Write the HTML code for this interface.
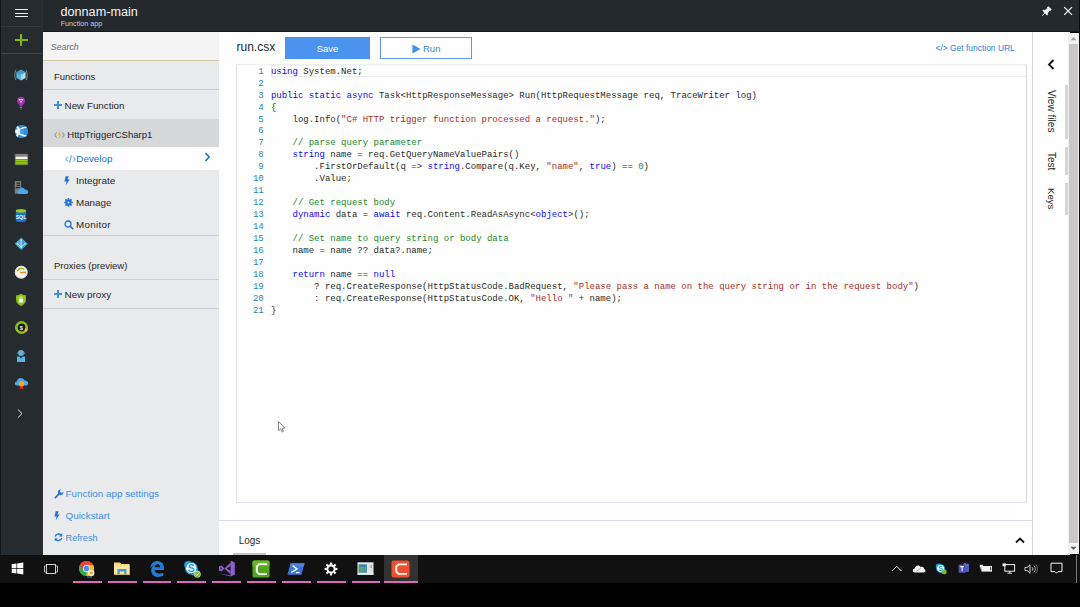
<!DOCTYPE html>
<html>
<head>
<meta charset="utf-8">
<style>
*{box-sizing:border-box;margin:0;padding:0}
html,body{width:1080px;height:607px;overflow:hidden;background:#000;font-family:"Liberation Sans",sans-serif;}
#root{position:absolute;left:0;top:0;width:1080px;height:607px;background:#000;overflow:hidden}
.abs{position:absolute}
#topbar{left:0;top:0;width:1080px;height:32px;background:#24292d}
#rail{left:0;top:0;width:43px;height:555px;background:#262b30}
#side{left:43px;top:32px;width:176px;height:523px;background:#e9eaec}
#main{left:219px;top:32px;width:851px;height:523px;background:#fefefe}
#task{left:0;top:555px;width:1080px;height:28px;background:#111111}
.t{position:absolute;white-space:nowrap;line-height:1}
.row{position:absolute;left:0;width:176px}
.hl{position:absolute;left:0;width:176px;height:1px;background:#cfd0d3}
#code{position:absolute;width:791px;height:439px;border:1px solid #e3e5ec;border-top-color:#eff0f4;border-right-color:#dadbe0;border-left-color:#e0e2e8;background:#fefefe}
.ln{position:absolute;left:0;width:26.7px;text-align:right;font-family:"Liberation Mono",monospace;font-size:9px;line-height:12px;color:#2b85b5;white-space:pre}
.cl{position:absolute;left:33.9px;font-family:"Liberation Mono",monospace;font-size:9px;line-height:12px;color:#2a2a2a;white-space:pre}
.k{color:#0c0cf4}.c{color:#23862a}.s{color:#a8302a}.n{color:#0a8a60}
.vt{writing-mode:vertical-rl;font-size:9.5px;color:#23272b}
</style>
</head>
<body>
<div id="root">
  <div id="topbar" class="abs">
    <div class="abs" style="left:0;top:31px;width:1080px;height:1px;background:#15191c"></div>
    <div class="t" style="left:60.5px;top:5.8px;font-size:12.65px;color:#f4f4f4;">donnam-main</div>
    <div class="t" style="left:60.7px;top:20.2px;font-size:7.2px;color:#c9cbcd;">Function app</div>
    <svg class="abs" style="left:1040px;top:5px" width="14" height="14" viewBox="0 0 14 14"><path d="M2.38 5.85 L7.05 10.52 L8.32 9.24 L3.66 4.58Z M6.91 2.60 L10.30 5.99 L11.72 4.58 L8.32 1.18Z M3.73 5.92 L6.98 9.17 L10.37 4.65 L8.25 2.53Z" fill="#f6f6f6"/><path d="M2.10 10.80 L5.35 7.55" stroke="#e8e8f0" stroke-width="1"/></svg>
    <svg class="abs" style="left:1062px;top:5px" width="12" height="12" viewBox="0 0 12 12"><path d="M2.2 2.1 L10 9.9 M10 2.1 L2.2 9.9" stroke="#f5f5f5" stroke-width="1.3" fill="none"/></svg>
  </div>
  <div id="rail" class="abs">
    <div class="abs" style="left:0;top:0;width:1px;height:555px;background:#14171a"></div>
    <div class="abs" style="left:42px;top:0;width:1px;height:32px;background:#2d3237"></div>
    <div class="abs" style="left:1px;top:26px;width:41px;height:1px;background:#33383d"></div>
    <div class="abs" style="left:1px;top:53px;width:41px;height:1px;background:#3a4650"></div>
    <!-- hamburger -->
    <div class="abs" style="left:14.5px;top:9px;width:13px;height:1px;background:#f0f0f0"></div>
    <div class="abs" style="left:14.5px;top:12.6px;width:13px;height:1px;background:#f0f0f0"></div>
    <div class="abs" style="left:14.5px;top:16.2px;width:13px;height:1px;background:#f0f0f0"></div>
    <!-- plus -->
    <div class="abs" style="left:14.5px;top:39px;width:13px;height:2px;background:#7fba00"></div>
    <div class="abs" style="left:20px;top:34px;width:2px;height:12px;background:#7fba00"></div>
    <!-- cube -->
    <svg class="abs" style="left:13px;top:68px" width="16" height="14" viewBox="0 0 16 14">
      <path d="M3 1.8 C1.4 4 1.4 10 3 12.2" stroke="#9aa0a6" stroke-width="0.8" fill="none"/><path d="M13 1.8 C14.6 4 14.6 10 13 12.2" stroke="#9aa0a6" stroke-width="0.8" fill="none"/>
      <path d="M8 1.4 L12.6 3.9 L8 6.4 L3.4 3.9Z" fill="#3aa0d8"/><path d="M3.4 3.9 L8 6.4 V12.4 L3.4 9.9Z" fill="#59b4e4"/><path d="M12.6 3.9 L8 6.4 V12.4 L12.6 9.9Z" fill="#a8dcf4"/>
    </svg>
    <!-- bulb -->
    <svg class="abs" style="left:16px;top:96px" width="10" height="15" viewBox="0 0 10 15">
      <circle cx="5" cy="4.8" r="4" fill="#9b2fae"/><path d="M2.6 7.6 L3.8 10.4 H6.2 L7.4 7.6Z" fill="#9b2fae"/>
      <path d="M2.4 3 H7.6 L5 7Z" fill="#f8eefa"/><circle cx="5" cy="4.4" r="1" fill="#a838b8"/>
      <rect x="3.8" y="11.2" width="2.4" height="0.8" fill="#8a8a8a"/><rect x="4.1" y="12.6" width="1.8" height="0.8" fill="#777"/>
    </svg>
    <!-- globe -->
    <svg class="abs" style="left:14px;top:124px" width="15" height="15" viewBox="0 0 15 15">
      <circle cx="7.5" cy="7.5" r="6.6" fill="#2f8fd8"/>
      <path d="M3 2.6 C5.6 4.5 5.2 9.8 2.6 12.2" stroke="#f2f8fc" stroke-width="2.2" fill="none"/>
      <path d="M3.4 7.2 C6 5 9 3.2 12.6 3.4" stroke="#f2f8fc" stroke-width="1.3" fill="none"/>
      <path d="M3.6 8 C6 10.5 9 12.2 12.4 11.6" stroke="#f2f8fc" stroke-width="1.3" fill="none"/>
      <circle cx="3.4" cy="7.5" r="2.3" fill="#f2f8fc"/><circle cx="8" cy="7.4" r="2.2" fill="#4aa4e4"/>
    </svg>
    <!-- window -->
    <svg class="abs" style="left:14px;top:153px" width="15" height="13" viewBox="0 0 15 13">
      <rect x="0.8" y="0.8" width="13.4" height="11.4" fill="#6e6a62"/><rect x="1.6" y="1.2" width="11.8" height="2" fill="#8a867e"/>
      <rect x="1.6" y="3.6" width="11.8" height="2.4" fill="#f4f4f0"/><rect x="1.6" y="6.6" width="11.8" height="1.8" fill="#9acb1c"/><rect x="1.6" y="9" width="11.8" height="2.4" fill="#8ac010"/>
    </svg>
    <!-- server cloud -->
    <svg class="abs" style="left:14px;top:180px" width="15" height="15" viewBox="0 0 15 15">
      <rect x="0.8" y="1" width="6.4" height="12.8" fill="#7a7a7a"/><rect x="1.8" y="2.6" width="4.4" height="1.2" fill="#2a2a2a"/><rect x="1.8" y="4.8" width="4.4" height="1.2" fill="#2a2a2a"/><rect x="1.8" y="7" width="4.4" height="1.2" fill="#2a2a2a"/>
      <rect x="1.6" y="2.6" width="0.8" height="1.2" fill="#b8d432"/><rect x="1.6" y="4.8" width="0.8" height="1.2" fill="#b8d432"/>
      <path d="M5.4 14 C3.6 14 3 12.8 3 11.8 C3 10.8 3.8 10 4.8 10 C5 8.6 6.4 7.6 7.8 7.6 C9.2 7.6 10.2 8.4 10.8 9.4 C12.6 9.2 14.2 10.4 14.2 12 C14.2 13.2 13.4 14 12.2 14Z" fill="#4aa8e8"/>
    </svg>
    <!-- sql -->
    <svg class="abs" style="left:15px;top:208px" width="12" height="15" viewBox="0 0 12 15">
      <path d="M0.8 2.8 V12.2 C0.8 13.4 3 14.2 6 14.2 C9 14.2 11.2 13.4 11.2 12.2 V2.8Z" fill="#1474d0"/>
      <ellipse cx="6" cy="2.8" rx="5.2" ry="1.9" fill="#9acb1c"/>
      <text x="6" y="10.6" text-anchor="middle" font-family="Liberation Sans" font-weight="bold" font-size="5.2" fill="#eaf4ff">SQL</text>
    </svg>
    <!-- AD diamond -->
    <svg class="abs" style="left:14.2px;top:236.8px" width="14.4" height="14.2" viewBox="0 0 15 15">
      <path d="M7.5 0.8 L14.2 7.2 L7.5 13.8 L0.8 7.2Z" fill="#4ab0e8"/><path d="M7.5 0.8 L14.2 7.2 L7.5 13.8Z" fill="#3a9edc"/>
      <path d="M7.5 3 V11 M3.8 7.2 L7.5 10.6 L11.2 7.2" stroke="#d8eefa" stroke-width="0.9" fill="none"/>
      <circle cx="7.5" cy="3.2" r="0.9" fill="#f4e060"/><circle cx="3.6" cy="7.2" r="0.9" fill="#f4e060"/><circle cx="11.4" cy="7.2" r="0.9" fill="#f4e060"/><circle cx="7.5" cy="10.8" r="0.9" fill="#f4e060"/>
    </svg>
    <!-- gauge -->
    <svg class="abs" style="left:14.2px;top:264.5px" width="14.4" height="14.4" viewBox="0 0 15 15">
      <circle cx="7.5" cy="7.5" r="6.6" fill="#f6f4f2"/><circle cx="7.5" cy="7.5" r="6.2" fill="none" stroke="#dcd6d0" stroke-width="0.8"/>
      <path d="M3.6 6.4 A4.4 4.4 0 0 1 10.6 4.6" stroke="#7fba00" stroke-width="1.4" fill="none"/>
      <rect x="6.2" y="7" width="6.2" height="1.5" fill="#f08a24"/>
    </svg>
    <!-- shield -->
    <svg class="abs" style="left:15.2px;top:293px" width="12" height="14" viewBox="0 0 13 15">
      <path d="M6.5 0.8 C8.4 2 10.2 2.4 11.8 2.4 V7.6 C11.8 10.6 9.4 12.8 6.5 14 C3.6 12.8 1.2 10.6 1.2 7.6 V2.4 C2.8 2.4 4.6 2 6.5 0.8Z" fill="#8cc21a"/>
      <rect x="4.2" y="6.4" width="4.6" height="3.8" fill="#f4f8ec"/><path d="M5.2 6.4 V5.4 A1.3 1.3 0 0 1 7.8 5.4 V6.4" stroke="#f4f8ec" stroke-width="0.9" fill="none"/>
    </svg>
    <!-- cost ring -->
    <svg class="abs" style="left:14px;top:320px" width="15" height="15" viewBox="0 0 15 15">
      <circle cx="7.5" cy="7.5" r="5.2" fill="#15181b" stroke="#8cc21a" stroke-width="2.6"/>
      <path d="M11.2 11.2 A5.2 5.2 0 0 0 12.6 8.6" stroke="#f4b440" stroke-width="2.6" fill="none"/>
      <text x="7.3" y="9.6" text-anchor="middle" font-family="Liberation Sans" font-weight="bold" font-size="5.6" fill="#f0f0f0">$</text>
    </svg>
    <!-- person -->
    <svg class="abs" style="left:16px;top:349px" width="10" height="14" viewBox="0 0 10 14">
      <circle cx="5" cy="4" r="2.9" fill="#59b4e4"/><path d="M1.2 5 A3.9 3.9 0 0 1 8.8 5" stroke="#9aa0a6" stroke-width="0.8" fill="none"/>
      <path d="M1 7.6 H3.4 L5 9.4 L6.6 7.6 H9 V13 H1Z" fill="#59b4e4"/>
    </svg>
    <!-- cloud cert -->
    <svg class="abs" style="left:14px;top:377px" width="15" height="14" viewBox="0 0 15 14">
      <path d="M3.4 8.6 C1.8 8.6 0.8 7.6 0.8 6.4 C0.8 5.2 1.8 4.4 2.8 4.4 C3 2.4 4.8 1 6.8 1 C8.6 1 10 2 10.6 3.4 C12.6 3.2 14.2 4.6 14.2 6.2 C14.2 7.6 13.2 8.6 11.8 8.6Z" fill="#4aa8e8"/>
      <path d="M6 8 L5.6 12.8 L7.5 11.6 L9.4 12.8 L9 8Z" fill="#d82828"/>
      <circle cx="7.5" cy="6.8" r="2.7" fill="#f8a41c"/>
    </svg>
    <!-- chevron -->
    <svg class="abs" style="left:16px;top:408px" width="8" height="12" viewBox="0 0 8 12"><path d="M1.9 1.5 L6 5.6 L1.9 9.7" stroke="#e6e6ea" stroke-width="1" fill="none"/></svg>
  </div>
  <div id="side" class="abs">
    <div class="abs" style="left:0;top:0;width:176px;height:28px;background:#f4f4f5"></div>
    <div class="abs" style="left:0;top:28px;width:176px;height:1px;background:#d9c9a8"></div>
    <div class="t" style="left:7.8px;top:11.2px;font-size:8.8px;font-style:italic;color:#6d6f72;">Search</div>
    <div class="t" style="left:11px;top:40px;font-size:9.5px;color:#23272b;">Functions</div>
    <div class="hl" style="top:57px"></div>
    <div class="t" style="left:21.6px;top:69px;font-size:9.8px;color:#23272b;">New Function</div>
    <div class="abs" style="left:0;top:87px;width:176px;height:28.5px;background:#d6d7d9"></div>
    <div class="t" style="left:24.3px;top:98.3px;font-size:9.55px;color:#23272b;">HttpTriggerCSharp1</div>
    <div class="abs" style="left:0;top:115.4px;width:176px;height:22.4px;background:#fefefe"></div>
    <div class="t" style="left:33.3px;top:122px;font-size:9.87px;color:#1b6fd0;">Develop</div>
    <div class="t" style="left:33px;top:144px;font-size:9.95px;color:#23272b;">Integrate</div>
    <div class="t" style="left:33px;top:166px;font-size:9.8px;color:#23272b;">Manage</div>
    <div class="t" style="left:33px;top:188px;font-size:9.8px;letter-spacing:0.3px;color:#23272b;">Monitor</div>
    <div class="hl" style="top:203px"></div>
    <div class="t" style="left:11px;top:229px;font-size:9.5px;color:#23272b;">Proxies (preview)</div>
    <div class="hl" style="top:247px"></div>
    <div class="t" style="left:21.6px;top:258px;font-size:9.9px;color:#23272b;">New proxy</div>
    <div class="hl" style="top:276px"></div>
    <div class="t" style="left:22.6px;top:457.4px;font-size:9.84px;color:#3f8fe0;">Function app settings</div>
    <div class="t" style="left:22.6px;top:479px;font-size:9.8px;color:#3f8fe0;">Quickstart</div>
    <div class="t" style="left:22.6px;top:501.8px;font-size:9.15px;color:#3f8fe0;">Refresh</div>
    <!-- plus New Function -->
    <div class="abs" style="left:11px;top:72.2px;width:7.6px;height:2px;background:#3f8fe4"></div>
    <div class="abs" style="left:13.8px;top:69.4px;width:2px;height:7.6px;background:#3f8fe4"></div>
    <!-- plus New proxy -->
    <div class="abs" style="left:11px;top:261.2px;width:7.6px;height:2px;background:#3f8fe4"></div>
    <div class="abs" style="left:13.8px;top:258.4px;width:2px;height:7.6px;background:#3f8fe4"></div>
    <!-- function icon -->
    <svg class="abs" style="left:11px;top:98px" width="11" height="10" viewBox="0 0 11 10">
      <path d="M2.6 2.4 L0.7 5 L2.6 7.6" stroke="#3f8fe4" stroke-width="0.9" fill="none"/><path d="M8.4 2.4 L10.3 5 L8.4 7.6" stroke="#3f8fe4" stroke-width="0.9" fill="none"/>
      <path d="M6.4 0.4 L3.4 5.2 H5.2 L4.2 9.6 L7.8 4.2 H5.8 Z" fill="#f8b928"/>
    </svg>
    <!-- </> develop -->
    <svg class="abs" style="left:21.5px;top:123px" width="11" height="8" viewBox="0 0 11 8">
      <path d="M2.8 1.6 L0.7 4 L2.8 6.4 M8.2 1.6 L10.3 4 L8.2 6.4 M6.4 0.4 L4.6 7.6" stroke="#2a7fdc" stroke-width="0.85" fill="none"/>
    </svg>
    <!-- develop chevron -->
    <svg class="abs" style="left:161px;top:120px" width="7" height="10" viewBox="0 0 7 10"><path d="M1.4 1 L5.2 5 L1.4 9" stroke="#1b6fd0" stroke-width="1.6" fill="none"/></svg>
    <!-- integrate bolt -->
    <svg class="abs" style="left:21px;top:144px" width="6" height="10" viewBox="0 0 6 10"><path d="M1.6 0.3 H4.6 L3.4 3.6 H5.6 L1.6 9.6 L2.6 5.4 H0.5Z" fill="#1b6fd0"/></svg>
    <!-- manage gear -->
    <svg class="abs" style="left:21px;top:166.4px" width="9" height="9" viewBox="0 0 9 9">
      <g fill="none" stroke="#1b6fd0"><circle cx="4.5" cy="4.5" r="2.1" stroke-width="2.1"/>
      <g stroke-width="1.5"><path d="M4.5 0.2 V1.6"/><path d="M4.5 7.4 V8.8"/><path d="M0.2 4.5 H1.6"/><path d="M7.4 4.5 H8.8"/><path d="M1.4 1.4 L2.4 2.4"/><path d="M6.6 6.6 L7.6 7.6"/><path d="M1.4 7.6 L2.4 6.6"/><path d="M6.6 2.4 L7.6 1.4"/></g></g>
    </svg>
    <!-- monitor magnifier -->
    <svg class="abs" style="left:21px;top:188px" width="10" height="10" viewBox="0 0 10 10"><circle cx="4" cy="4" r="3" fill="none" stroke="#1b6fd0" stroke-width="1.3"/><path d="M6.2 6.2 L9.2 9.2" stroke="#1b6fd0" stroke-width="1.5"/></svg>
    <!-- wrench -->
    <svg class="abs" style="left:10.5px;top:457px" width="10" height="10" viewBox="0 0 10 10">
      <path d="M1.4 8.6 L5.6 4.4" stroke="#2474dc" stroke-width="1.9" stroke-linecap="round"/>
      <path d="M9.3 2.6 A2.8 2.8 0 1 1 7.2 0.6 L5.9 2 L6.4 3.6 L8 4 Z" fill="#2474dc"/>
    </svg>
    <!-- bolt -->
    <svg class="abs" style="left:10.6px;top:479.4px" width="6" height="10" viewBox="0 0 6 10"><path d="M1.6 0.3 H4.6 L3.4 3.6 H5.6 L1.6 9.6 L2.6 5.4 H0.5Z" fill="#2474dc"/></svg>
    <!-- refresh -->
    <svg class="abs" style="left:10.8px;top:501.2px" width="9" height="8.6" viewBox="0 0 10 10" preserveAspectRatio="none">
      <path d="M1.4 4.2 A3.7 3.7 0 0 1 7.8 2.4" stroke="#2474dc" stroke-width="1.5" fill="none"/><path d="M9.2 0.4 V4 H5.6Z" fill="#2474dc"/>
      <path d="M8.6 5.8 A3.7 3.7 0 0 1 2.2 7.6" stroke="#2474dc" stroke-width="1.5" fill="none"/><path d="M0.8 9.6 V6 H4.4Z" fill="#2474dc"/>
    </svg>
  </div>
  <div id="main" class="abs">
    <div class="t" style="left:17.5px;top:8.5px;font-size:12px;color:#23272b;">run.csx</div>
    <div class="abs" style="left:66px;top:5px;width:85px;height:22px;background:#4a94f0"></div>
    <div class="t" style="left:66px;top:12px;width:85px;text-align:center;font-size:9.5px;color:#fff;">Save</div>
    <div class="abs" style="left:161px;top:5px;width:92px;height:22px;border:1px solid #5a9ae8;background:#fefefe"></div>
    <div class="t" style="left:204px;top:12px;font-size:9.5px;color:#3a86d4;">Run</div>
    <svg class="abs" style="left:193px;top:11.6px" width="9" height="10" viewBox="0 0 9 10"><path d="M0.4 0.6 L8.6 5 L0.4 9.4 Z" fill="#4590ee"/></svg>
    <div class="t" style="left:716.5px;top:12px;font-size:8.45px;color:#2f7fd6;">&lt;/&gt; Get function URL</div>
    <div id="code" style="left:17px;top:32px;">
      <div class="abs" style="left:34px;top:0;width:755px;height:12px;border:1px solid #ebebeb;border-right:none;border-top-color:#f4f4f4"></div>
      <div class="ln" style="top:0.75px">1</div>
      <div class="cl" style="top:0.75px"><span class="k">using</span> System.Net;</div>
      <div class="ln" style="top:12.69px">2</div>
      <div class="ln" style="top:24.63px">3</div>
      <div class="cl" style="top:24.63px"><span class="k">public</span> <span class="k">static</span> <span class="k">async</span> Task&lt;HttpResponseMessage&gt; Run(HttpRequestMessage req, TraceWriter log)</div>
      <div class="ln" style="top:36.57px">4</div>
      <div class="cl" style="top:36.57px">{</div>
      <div class="ln" style="top:48.51px">5</div>
      <div class="cl" style="top:48.51px">    log.Info(<span class="s">"C# HTTP trigger function processed a request."</span>);</div>
      <div class="ln" style="top:60.45px">6</div>
      <div class="ln" style="top:72.39px">7</div>
      <div class="cl" style="top:72.39px">    <span class="c">// parse query parameter</span></div>
      <div class="ln" style="top:84.33px">8</div>
      <div class="cl" style="top:84.33px">    <span class="k">string</span> name = req.GetQueryNameValuePairs()</div>
      <div class="ln" style="top:96.27px">9</div>
      <div class="cl" style="top:96.27px">        .FirstOrDefault(q =&gt; <span class="k">string</span>.Compare(q.Key, <span class="s">"name"</span>, <span class="k">true</span>) == <span class="n">0</span>)</div>
      <div class="ln" style="top:108.21px">10</div>
      <div class="cl" style="top:108.21px">        .Value;</div>
      <div class="ln" style="top:120.15px">11</div>
      <div class="ln" style="top:132.09px">12</div>
      <div class="cl" style="top:132.09px">    <span class="c">// Get request body</span></div>
      <div class="ln" style="top:144.03px">13</div>
      <div class="cl" style="top:144.03px">    <span class="k">dynamic</span> data = <span class="k">await</span> req.Content.ReadAsAsync&lt;<span class="k">object</span>&gt;();</div>
      <div class="ln" style="top:155.97px">14</div>
      <div class="ln" style="top:167.91px">15</div>
      <div class="cl" style="top:167.91px">    <span class="c">// Set name to query string or body data</span></div>
      <div class="ln" style="top:179.85px">16</div>
      <div class="cl" style="top:179.85px">    name = name ?? data?.name;</div>
      <div class="ln" style="top:191.79px">17</div>
      <div class="ln" style="top:203.73px">18</div>
      <div class="cl" style="top:203.73px">    <span class="k">return</span> name == <span class="k">null</span></div>
      <div class="ln" style="top:215.67px">19</div>
      <div class="cl" style="top:215.67px">        ? req.CreateResponse(HttpStatusCode.BadRequest, <span class="s">"Please pass a name on the query string or in the request body"</span>)</div>
      <div class="ln" style="top:227.61px">20</div>
      <div class="cl" style="top:227.61px">        : req.CreateResponse(HttpStatusCode.OK, <span class="s">"Hello "</span> + name);</div>
      <div class="ln" style="top:239.55px">21</div>
      <div class="cl" style="top:239.55px">}</div>
    </div>
    <div class="abs" style="left:0;top:488px;width:813px;height:1px;background:#dcdde6"></div>
    <div class="t" style="left:19.7px;top:504px;font-size:10px;color:#2b2f33;">Logs</div>
    <div class="abs" style="left:14px;top:521px;width:32.5px;height:2px;background:#c4c4c4"></div>
    <svg class="abs" style="left:796px;top:504px" width="10" height="8" viewBox="0 0 10 8"><path d="M1 6.5 L5 2.5 L9 6.5" stroke="#111" stroke-width="1.8" fill="none"/></svg>
    <!-- right panel -->
    <div class="abs" style="left:813px;top:0;width:1px;height:523px;background:#d3d3d8"></div>
    <svg class="abs" style="left:828px;top:27px" width="8" height="11" viewBox="0 0 8 11"><path d="M6.5 1 L2 5.5 L6.5 10" stroke="#111" stroke-width="1.8" fill="none"/></svg>
    <div class="t vt" style="left:827px;top:57.5px;font-size:10.1px">View files</div>
    <div class="t vt" style="left:827px;top:120px;font-size:10px">Test</div>
    <div class="t vt" style="left:827px;top:156px;font-size:9.6px">Keys</div>
    <div class="abs" style="left:846px;top:53px;width:3px;height:54px;background:#d6d6d8"></div>
    <div class="abs" style="left:846px;top:115px;width:3px;height:28px;background:#d6d6d8"></div>
    <div class="abs" style="left:846px;top:151px;width:3px;height:32px;background:#d6d6d8"></div>
  </div>
  <!-- scrollbar -->
  <div class="abs" style="left:1068px;top:33px;width:11px;height:521px;background:#f3f1f0"></div>
  <div class="abs" style="left:1069px;top:44px;width:9px;height:499px;background:#c9c7c8"></div>
  <svg class="abs" style="left:1070px;top:36px" width="7" height="5" viewBox="0 0 7 5"><path d="M0.5 4.2 L3.5 1 L6.5 4.2Z" fill="#a3a3a3"/></svg>
  <svg class="abs" style="left:1070px;top:546px" width="7" height="5" viewBox="0 0 7 5"><path d="M0.5 0.8 L3.5 4 L6.5 0.8Z" fill="#606060"/></svg>
  <div class="abs" style="left:1079px;top:0;width:1px;height:555px;background:#0c0c0c"></div>
  <div id="task" class="abs">
<div class="abs" style="left:384px;top:0;width:34px;height:26px;background:#323232"></div>
<div class="abs" style="left:73px;top:26px;width:29px;height:2px;background:#e264c0"></div>
<div class="abs" style="left:108px;top:26px;width:29px;height:2px;background:#e264c0"></div>
<div class="abs" style="left:142.6px;top:26px;width:28.5px;height:2px;background:#e264c0"></div>
<div class="abs" style="left:177.3px;top:26px;width:28.7px;height:2px;background:#e264c0"></div>
<div class="abs" style="left:212.2px;top:26px;width:28.7px;height:2px;background:#e264c0"></div>
<div class="abs" style="left:247px;top:26px;width:29px;height:2px;background:#e264c0"></div>
<div class="abs" style="left:282px;top:26px;width:29px;height:2px;background:#e264c0"></div>
<div class="abs" style="left:317px;top:26px;width:28.5px;height:2px;background:#e264c0"></div>
<div class="abs" style="left:352px;top:26px;width:28.2px;height:2px;background:#e264c0"></div>
<div class="abs" style="left:384px;top:26px;width:34px;height:2px;background:#e264c0"></div>
<svg class="abs" style="left:11px;top:7px" width="13" height="13" viewBox="0 0 13 13"><path d="M0.7 2.2 L5.4 1.5 V6.1 H0.7Z M6.1 1.4 L12.3 0.5 V6.1 H6.1Z M0.7 6.8 H5.4 V11.4 L0.7 10.7Z M6.1 6.8 H12.3 V12.4 L6.1 11.5Z" fill="#fff"/></svg>
<svg class="abs" style="left:43px;top:8px" width="16" height="12" viewBox="0 0 16 12"><rect x="3.5" y="1.5" width="9" height="9" fill="none" stroke="#e4e4e4" stroke-width="0.9"/><path d="M1.5 3 V9 M14.5 3 V9" stroke="#d0d0d0" stroke-width="0.9" fill="none"/><path d="M1.5 3 H3 M1.5 9 H3 M13 3 H14.5 M13 9 H14.5" stroke="#d0d0d0" stroke-width="0.8" fill="none"/></svg>
<svg class="abs" style="left:78px;top:5px" width="19" height="19" viewBox="0 0 19 19">
<circle cx="8.5" cy="8.5" r="7.5" fill="#e8453c"/>
<path d="M8.5 8.5 L2 4.75 A7.5 7.5 0 0 0 8.5 16 L12 14.5Z" fill="#34a853"/>
<path d="M8.5 8.5 L8.5 16 A7.5 7.5 0 0 0 15 4.75 L8.5 4.75Z" fill="#f4c20d"/>
<path d="M2 4.75 A7.5 7.5 0 0 1 15 4.75 L8.5 4.75 L5.2 10.4Z" fill="#e8453c"/>
<circle cx="8.5" cy="8.5" r="3.6" fill="#f2f2f2"/><circle cx="8.5" cy="8.5" r="2.8" fill="#4a8af4"/>
<circle cx="13.2" cy="13" r="3.2" fill="#f6e7b8"/><circle cx="13.2" cy="13" r="1.4" fill="#f0a030"/>
<rect x="9" y="16.5" width="5" height="1" fill="#3a8ad0"/>
</svg>
<svg class="abs" style="left:113px;top:6px" width="18" height="16" viewBox="0 0 18 16">
<path d="M1 1.5 H7 L8.3 3 H16.5 V13.5 H1Z" fill="#f7d978"/>
<path d="M1 4.5 H16.5 V13.5 H1Z" fill="#fbe6a2"/>
<path d="M4.5 8 H13.5 V13.5 H4.5Z" fill="#3a9de0"/>
<path d="M6.8 10.5 H11.2 V13.5 H6.8Z" fill="#fbe6a2"/>
<rect x="1" y="13" width="16" height="0.8" fill="#d8b04a"/>
</svg>
<svg class="abs" style="left:149px;top:5px" width="16" height="18" viewBox="0 0 16 18">
<path d="M1.2 8.2 C1.6 3.6 4.8 0.9 8.4 0.9 C12.6 0.9 15 4 15 8.3 V10 H5.6 C5.8 12.4 7.6 13.6 10 13.6 C11.6 13.6 13 13.1 14.2 12.4 V15.6 C12.8 16.4 11.2 16.9 9.2 16.9 C5.2 16.9 2.2 14.4 2.2 10.4 C2.2 8 3.4 6 5.4 4.9 C3.6 5.4 2 6.6 1.2 8.2Z M5.7 7.3 H11.2 C11.2 5.4 10.1 4.3 8.5 4.3 C6.9 4.3 5.9 5.6 5.7 7.3Z" fill="#1f7fd8" fill-rule="evenodd"/></svg>
<svg class="abs" style="left:183px;top:5px" width="20" height="19" viewBox="0 0 20 19">
<circle cx="5.2" cy="5" r="4" fill="#18a0e4"/><circle cx="11.4" cy="11.4" r="4" fill="#18a0e4"/>
<circle cx="8.3" cy="8.2" r="6.3" fill="#18a0e4"/><circle cx="8.3" cy="8.2" r="5.1" fill="#fff"/>
<text x="8.3" y="12" text-anchor="middle" font-family="Liberation Sans" font-weight="bold" font-size="10.5" fill="#18a0e4">S</text>
<circle cx="14.3" cy="14.2" r="3.4" fill="#ddd"/><circle cx="14.3" cy="14.2" r="2.8" fill="#7cbb2a"/>
<path d="M12.8 14.3 L13.9 15.4 L15.8 13.2" stroke="#fff" stroke-width="0.9" fill="none"/>
</svg>
<svg class="abs" style="left:218px;top:5px" width="18" height="18" viewBox="0 0 18 18">
<path d="M12.6 0.6 L16.8 2.4 V14.8 L12.6 16.6 Z" fill="#8e5fd0"/>
<path d="M12.6 2.5 L3.4 11.6 L1 10.4 V6.6 L3.4 5.4 L12.6 14.5 Z M12.6 5.9 L8.8 8.5 L12.6 11.1Z M2.6 7.2 V9.8 L4 8.5Z" fill="#8e5fd0" fill-rule="evenodd"/>
<path d="M1.2 13.4 L12.6 16.6 L12.6 15.2Z" fill="#7a4fc0"/>
</svg>
<svg class="abs" style="left:252px;top:5px" width="18" height="18" viewBox="0 0 18 18">
<rect x="0.5" y="0.5" width="17" height="17" rx="1.5" fill="#52a51c"/>
<rect x="0.5" y="0.5" width="17" height="6" rx="1.5" fill="#66b52a"/>
<path d="M15 3.2 H6.6 L3.8 6 V12.3 L6.6 15.1 H15 V13.3 H7.6 L5.8 11.5 V6.8 L7.6 5 H15Z" fill="#f4fff0"/>
</svg>
<svg class="abs" style="left:287px;top:8px" width="18" height="12" viewBox="0 0 18 12">
<path d="M3.6 0.3 H17.6 L14.4 11.7 H0.4Z" fill="#3d72d8"/>
<path d="M3.6 0.3 H17.6 L16.6 3.5 H2.7Z" fill="#4a82e4"/>
<path d="M5.6 2.6 L10 6 L4.4 9.4" stroke="#fff" stroke-width="1.4" fill="none"/><path d="M9 9.6 H12.6" stroke="#fff" stroke-width="1.2"/>
</svg>
<svg class="abs" style="left:323.5px;top:6.5px" width="14" height="14" viewBox="0 0 15 15">
<g fill="none" stroke="#fff"><circle cx="7.5" cy="7.5" r="3.9" stroke-width="2.2"/>
<g stroke-width="2.3"><path d="M7.5 0.6 V3"/><path d="M7.5 12 V14.4"/><path d="M0.6 7.5 H3"/><path d="M12 7.5 H14.4"/><path d="M2.6 2.6 L4.3 4.3"/><path d="M10.7 10.7 L12.4 12.4"/><path d="M2.6 12.4 L4.3 10.7"/><path d="M10.7 4.3 L12.4 2.6"/></g></g>
</svg>
<svg class="abs" style="left:357px;top:7px" width="17" height="13" viewBox="0 0 17 13">
<rect x="0.5" y="0.3" width="16" height="12.4" fill="#e6e8ea"/>
<rect x="1.5" y="2.2" width="8.5" height="8.6" fill="#4f8fa8"/>
<rect x="3" y="4" width="4" height="5.5" fill="#5aa860"/>
<rect x="3" y="3" width="5.5" height="1.6" fill="#3f78c0"/>
<rect x="11" y="2.2" width="4.6" height="8.6" fill="#dfe3e6"/>
<rect x="13.6" y="3" width="1" height="3" fill="#4a90c0"/>
<rect x="0.5" y="11.4" width="16" height="1.3" fill="#f6f6f6"/>
</svg>
<svg class="abs" style="left:391px;top:5px" width="19" height="18" viewBox="0 0 19 18">
<rect x="0.5" y="0.5" width="18" height="17" rx="2.2" fill="#f0502e"/>
<path d="M16 3.4 H7 L4.2 6.2 V12 L7 14.8 H16 V13 H8 L6.2 11.2 V7 L8 5.2 H16Z" fill="#fff5f0"/>
</svg>
<svg class="abs" style="left:891px;top:10px" width="12" height="7" viewBox="0 0 12 7"><path d="M1 6 L5.7 1.3 L10.4 6" stroke="#eee" stroke-width="1" fill="none"/></svg>
<svg class="abs" style="left:912px;top:9px" width="14" height="9" viewBox="0 0 14 9"><path d="M3.2 8.4 C1.6 8.4 0.8 7.4 0.8 6.4 C0.8 5.3 1.7 4.6 2.6 4.6 C2.8 2.8 4.2 1.4 5.9 1.4 C7.1 1.4 8 2 8.6 3 C9 2.8 9.4 2.8 9.8 2.8 C11.2 2.8 12.2 3.8 12.2 5 C12.9 5.2 13.4 5.9 13.4 6.7 C13.4 7.7 12.7 8.4 11.7 8.4Z" fill="#f4f4f4"/><path d="M3.4 8.2 L9 3.8" stroke="#888" stroke-width="0.6"/></svg>
<svg class="abs" style="left:935px;top:8px" width="13" height="12" viewBox="0 0 13 12">
<circle cx="3.6" cy="3.4" r="2.8" fill="#18a0e4"/><circle cx="7.6" cy="7.6" r="2.8" fill="#18a0e4"/>
<circle cx="5.6" cy="5.5" r="4.4" fill="#18a0e4"/><circle cx="5.6" cy="5.5" r="3.4" fill="#fff"/>
<text x="5.6" y="8" text-anchor="middle" font-family="Liberation Sans" font-weight="bold" font-size="7" fill="#18a0e4">S</text>
<circle cx="9.3" cy="9" r="2.4" fill="#7cbb2a"/></svg>
<svg class="abs" style="left:958px;top:8px" width="12" height="11" viewBox="0 0 12 11">
<rect x="5" y="2" width="6" height="7" rx="1" fill="#5059c9"/><circle cx="9.6" cy="1.8" r="1.3" fill="#6a72d8"/><circle cx="6.8" cy="1.6" r="1.5" fill="#6a72d8"/>
<rect x="0.6" y="1.6" width="7" height="8.2" rx="0.8" fill="#4b53bc"/>
<path d="M2.2 3.6 H6 M4.1 3.6 V8.2" stroke="#fff" stroke-width="1.1"/></svg>
<svg class="abs" style="left:979px;top:9px" width="14" height="9" viewBox="0 0 14 9">
<rect x="2.4" y="2" width="10.6" height="5.6" fill="#f2f2f2"/><rect x="0.8" y="0.8" width="3" height="2.6" fill="#f2f2f2"/><rect x="1.6" y="3.4" width="1" height="2" fill="#f2f2f2"/><rect x="11" y="3.2" width="1.2" height="3" fill="#555"/></svg>
<svg class="abs" style="left:1002px;top:8px" width="14" height="11" viewBox="0 0 14 11">
<rect x="2.8" y="1.6" width="9.8" height="6.6" fill="none" stroke="#f2f2f2" stroke-width="1"/><rect x="0.6" y="0.4" width="3.2" height="2.8" fill="#f2f2f2"/><path d="M7.7 8.2 V10 M5.4 10.2 H10" stroke="#f2f2f2" stroke-width="0.9"/></svg>
<svg class="abs" style="left:1024px;top:9px" width="14" height="10" viewBox="0 0 14 10">
<path d="M1 3.4 H3.2 L6 0.8 V9.2 L3.2 6.6 H1Z" fill="none" stroke="#e8e8e8" stroke-width="0.9"/>
<path d="M8 3.2 A2.4 2.4 0 0 1 8 6.8" stroke="#d0d0d0" stroke-width="0.9" fill="none"/>
<path d="M9.8 1.6 A4.6 4.6 0 0 1 9.8 8.4" stroke="#b0b0b0" stroke-width="0.9" fill="none"/>
<path d="M11.6 0.4 A6.6 6.6 0 0 1 11.6 9.6" stroke="#777" stroke-width="0.8" fill="none"/></svg>
<svg class="abs" style="left:1050px;top:7px" width="13" height="13" viewBox="0 0 13 13"><path d="M1 1.2 H12 V9.6 H8 L6.5 11.2 L5 9.6 H1Z" fill="none" stroke="#f4f4f4" stroke-width="1"/></svg>
<div class="abs" style="left:1076px;top:0;width:1px;height:28px;background:#7a7a7a"></div>
  </div>
  <!-- cursor -->
  <svg class="abs" style="left:278px;top:421px" width="9" height="12" viewBox="0 0 9 12"><path d="M0.5 0.4 V9.6 L2.5 7.7 L4 11 L5.4 10.4 L4 7.3 L6.8 7.1Z" fill="#fff" stroke="#60606a" stroke-width="0.75"/></svg>
</div>
</body>
</html>
